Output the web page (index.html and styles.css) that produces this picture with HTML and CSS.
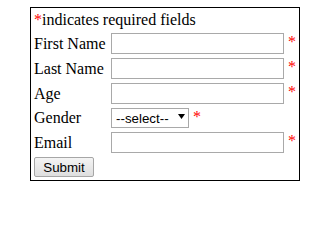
FILE: index.html
```html
<!DOCTYPE html>
<html>
<head>
<meta charset="utf-8">
<link rel="stylesheet" href="styles.css">
</head>
<body>
<form class="reg-form">
  <table class="form-table">
    <tr>
      <td colspan="2"><span class="req">*</span>indicates required fields</td>
    </tr>
    <tr>
      <td class="label">First Name</td>
      <td><input class="text-field" type="text"> <span class="req">*</span></td>
    </tr>
    <tr>
      <td class="label">Last Name</td>
      <td><input class="text-field" type="text"> <span class="req">*</span></td>
    </tr>
    <tr>
      <td class="label">Age</td>
      <td><input class="text-field" type="text"> <span class="req">*</span></td>
    </tr>
    <tr>
      <td class="label">Gender</td>
      <td><span class="select-wrap"><select class="select-field"><option>--select--</option><option>Male</option><option>Female</option></select><svg class="caret" width="7" height="5" viewBox="0 0 7 5"><path d="M0 0H7L3.5 5Z" fill="#000"/></svg></span> <span class="req">*</span></td>
    </tr>
    <tr>
      <td class="label">Email</td>
      <td><input class="text-field" type="text"> <span class="req">*</span></td>
    </tr>
    <tr>
      <td colspan="2"><button class="submit-btn" type="button">Submit</button></td>
    </tr>
  </table>
</form>
</body>
</html>
```

FILE: styles.css
```css
html, body {
  margin: 0;
  padding: 0;
  background: #ffffff;
}

body {
  font-family: "Liberation Serif", "Times New Roman", serif;
  font-size: 16px;
  color: #000;
}

.reg-form {
  margin: 0;
  padding: 7px 0 0 30px;
}

.form-table {
  border: 1px solid #000;
  border-spacing: 2px;
  border-collapse: separate;
}

.form-table td {
  padding: 1px;
  line-height: normal;
}

.form-table td.label {
  width: 73px;
  white-space: nowrap;
}

.req {
  color: #ff0000;
}

.text-field {
  box-sizing: border-box;
  width: 173px;
  height: 21px;
  margin: 0;
  padding: 1px 2px;
  border: 1px solid #a9a9a9;
  background: #fff;
  font-family: "Liberation Sans", Arial, sans-serif;
  font-size: 13.33px;
  vertical-align: top;
  outline: none;
}

.select-wrap {
  position: relative;
  display: inline-block;
  vertical-align: top;
  height: 20px;
}

.select-field {
  -webkit-appearance: none;
  appearance: none;
  box-sizing: border-box;
  width: 78px;
  height: 20px;
  margin: 0;
  padding: 0 0 0 4px;
  border: 1px solid #a9a9a9;
  border-radius: 0;
  background: #fff;
  color: #000;
  font-family: "Liberation Sans", Arial, sans-serif;
  font-size: 13.33px;
  vertical-align: top;
  outline: none;
}

.caret {
  position: absolute;
  left: 67px;
  top: 6px;
  pointer-events: none;
}

.submit-btn {
  box-sizing: border-box;
  width: 60px;
  height: 20px;
  margin: 0;
  padding: 0;
  border: 1px solid #a6a6a6;
  border-radius: 2px;
  background: linear-gradient(#f4f4f4, #dedede);
  color: #000;
  font-family: "Liberation Sans", Arial, sans-serif;
  font-size: 13.33px;
  vertical-align: top;
}
```
